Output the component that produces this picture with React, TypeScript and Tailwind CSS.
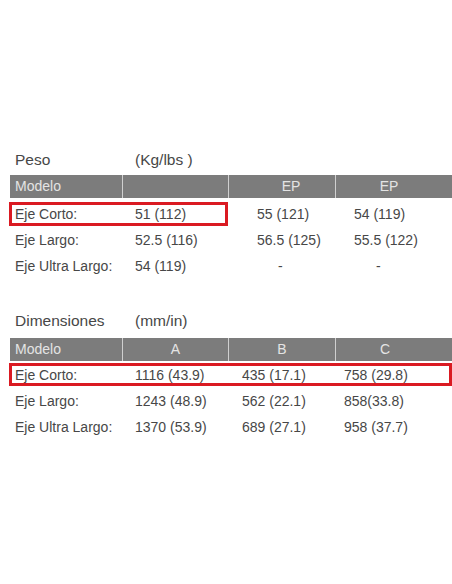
// Ficha técnica — tablas de peso y dimensiones
const font = { fontFamily: '"Liberation Sans", Arial, sans-serif' };

type Row = { label: string; cells: string[]; highlight?: boolean };

const pesoRows: Row[] = [
  { label: 'Eje Corto:', cells: ['51 (112)', '55 (121)', '54 (119)'], highlight: true },
  { label: 'Eje Largo:', cells: ['52.5 (116)', '56.5 (125)', '55.5 (122)'] },
  { label: 'Eje Ultra Largo:', cells: ['54 (119)', '-', '-'] },
];

const dimRows: Row[] = [
  { label: 'Eje Corto:', cells: ['1116 (43.9)', '435 (17.1)', '758 (29.8)'], highlight: true },
  { label: 'Eje Largo:', cells: ['1243 (48.9)', '562 (22.1)', '858(33.8)'] },
  { label: 'Eje Ultra Largo:', cells: ['1370 (53.9)', '689 (27.1)', '958 (37.7)'] },
];

const grid = 'grid grid-cols-[112px_106px_107px_107px]';

export default function App() {
  return (
    <div className="w-[452px] h-[584px] bg-white text-[#474747]" style={font}>
      <div className="pl-[10px] pt-[150px]">
        {/* Peso */}
        <div className="flex h-[20px] items-center text-[15.5px]">
          <span className="w-[125px] pl-[5px]">Peso</span>
          <span>(Kg/lbs )</span>
        </div>
        <div className={`${grid} mt-[5px] h-[23px] bg-[#7c7c7c] text-[14px] text-[#e4e4e4]`}>
          <div className="flex items-center pl-[5px]">Modelo</div>
          <div className="border-l border-[#d0d0d0]" />
          <div className="flex items-center justify-center border-l border-[#d0d0d0] pl-[18px]">EP</div>
          <div className="flex items-center justify-center border-l border-[#d0d0d0]">EP</div>
        </div>
        <div className="mt-[3px]">
          {pesoRows.map((r, i) => (
            <div key={r.label} className={`${grid} relative h-[26px] items-center text-[14px]`}>
              {r.highlight && (
                <div className="absolute left-[-1px] top-[1px] h-[24px] w-[219px] border-[3px] border-[#da1a22]" />
              )}
              <span className="pl-[5px]">{r.label}</span>
              <span className="pl-[13px]">{r.cells[0]}</span>
              <span className={i === 2 ? 'pl-[50px]' : 'pl-[29px]'}>{r.cells[1]}</span>
              <span className={i === 2 ? 'pl-[41px]' : 'pl-[19px]'}>{r.cells[2]}</span>
            </div>
          ))}
        </div>

        {/* Dimensiones */}
        <div className="mt-[32px] flex h-[20px] items-center text-[15.5px]">
          <span className="w-[125px] pl-[5px]">Dimensiones</span>
          <span>(mm/in)</span>
        </div>
        <div className={`${grid} mt-[7px] h-[23px] bg-[#7c7c7c] text-[14px] text-[#e4e4e4]`}>
          <div className="flex items-center pl-[5px]">Modelo</div>
          <div className="flex items-center justify-center border-l border-[#d0d0d0]">A</div>
          <div className="flex items-center justify-center border-l border-[#d0d0d0]">B</div>
          <div className="flex items-center justify-center border-l border-[#d0d0d0] pr-[8px]">C</div>
        </div>
        <div className="mt-[1px]">
          {dimRows.map((r) => (
            <div key={r.label} className={`${grid} relative h-[26px] items-center text-[14px]`}>
              {r.highlight && (
                <div className="absolute left-[-1px] right-0 top-[1px] h-[23px] border-[3px] border-[#da1a22]" />
              )}
              <span className="pl-[5px]">{r.label}</span>
              <span className="pl-[13px]">{r.cells[0]}</span>
              <span className="pl-[14px]">{r.cells[1]}</span>
              <span className="pl-[9px]">{r.cells[2]}</span>
            </div>
          ))}
        </div>
      </div>
    </div>
  );
}
